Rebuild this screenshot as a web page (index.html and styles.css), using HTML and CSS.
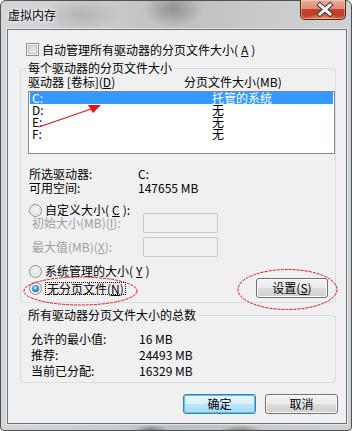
FILE: index.html
```html
<!DOCTYPE html>
<html lang="zh-CN">

<head>
    <meta charset="UTF-8">
    <title>虚拟内存</title>
    <link rel="stylesheet" href="styles.css">
</head>

<body>
    <div class="window">
        <div class="titlebar">
            <span class="title">虚拟内存</span>
            <a class="close" href="#">
                <svg width="46" height="19" viewBox="0 0 46 19">
                    <path d="M19 5 L29 14 M29 5 L19 14" stroke="#3d3d3d" stroke-width="5" stroke-linecap="square" fill="none"/>
                    <path d="M19 5 L29 14 M29 5 L19 14" stroke="#fff" stroke-width="3" stroke-linecap="square" fill="none"/>
                </svg>
            </a>
        </div>

        <div class="client">
            <label class="check-row"><span class="checkbox"></span>自动管理所有驱动器的分页文件大小(<u>A</u>)</label>

            <fieldset class="group group-drives">
                <legend>每个驱动器的分页文件大小</legend>
                <div class="list-head">
                    <span class="head-drive">驱动器 [卷标](<u>D</u>)</span>
                    <span>分页文件大小(MB)</span>
                </div>
                <ul class="list">
                    <li class="selected"><span class="col-drive">C:</span><span>托管的系统</span></li>
                    <li><span class="col-drive">D:</span><span>无</span></li>
                    <li><span class="col-drive">E:</span><span>无</span></li>
                    <li><span class="col-drive">F:</span><span>无</span></li>
                </ul>

                <div class="info">
                    <span>所选驱动器:</span><span>C:</span>
                    <span>可用空间:</span><span>147655 MB</span>
                </div>

                <div class="radio-row custom"><span class="radio"></span>自定义大小(<u>C</u>):</div>
                <div class="size-rows">
                    <div class="size-row"><span class="disabled">初始大小(MB)(<u>I</u>):</span><span class="textbox"></span></div>
                    <div class="size-row"><span class="disabled">最大值(MB)(<u>X</u>):</span><span class="textbox"></span></div>
                </div>
                <div class="radio-row"><span class="radio"></span>系统管理的大小(<u>Y</u>)</div>
                <div class="radio-row none-row">
                    <span class="radio on"></span><span class="focus">无分页文件(<u>N</u>)</span>
                    <a class="btn btn-set" href="#">设置(<u>S</u>)</a>
                </div>
            </fieldset>

            <fieldset class="group group-total">
                <legend>所有驱动器分页文件大小的总数</legend>
                <div class="totals">
                    <span>允许的最小值:</span><span>16 MB</span>
                    <span>推荐:</span><span>24493 MB</span>
                    <span>当前已分配:</span><span>16329 MB</span>
                </div>
            </fieldset>

            <div class="actions">
                <a class="btn btn-default" href="#">确定</a>
                <a class="btn" href="#">取消</a>
            </div>
        </div>

        <!-- 红色标注 -->
        <svg class="marks" width="352" height="431" viewBox="0 0 352 431">
            <line x1="39" y1="127" x2="91" y2="109" stroke="#e41414" stroke-width="1.2"/>
            <polygon points="88,105 101,105 93,113" fill="#e41414"/>
            <ellipse cx="80.5" cy="291" rx="56.5" ry="14" fill="none" stroke="#e41414" stroke-width="1" stroke-dasharray="3 1"/>
            <ellipse cx="287.5" cy="289.5" rx="49.5" ry="20" fill="none" stroke="#e41414" stroke-width="1" stroke-dasharray="3 1"/>
        </svg>
    </div>
</body>

</html>
```

FILE: styles.css
```css
* {
    margin: 0;
    padding: 0;
    box-sizing: border-box;
    list-style: none;
}

body {
    width: 352px;
    height: 431px;
    overflow: hidden;
    font: 12px/12px "Noto Sans CJK SC", "Noto Sans", sans-serif;
    color: #000;
}

a {
    color: #000;
    text-decoration: none;
}

u {
    text-underline-offset: 1px;
}

.window {
    position: relative;
    width: 352px;
    height: 431px;
    display: flex;
    flex-direction: column;
    border: 1px solid #4d5257;
    border-radius: 6px 6px 4px 4px;
    background:
        radial-gradient(ellipse 30px 18px at 172px 8px, rgba(90, 90, 90, .45), rgba(90, 90, 90, 0)),
        radial-gradient(ellipse 40px 16px at 80px 14px, rgba(120, 120, 120, .3), rgba(120, 120, 120, 0)),
        radial-gradient(ellipse 18px 6px at 150px 430px, rgba(60, 60, 60, .6), rgba(60, 60, 60, 0)),
        radial-gradient(ellipse 22px 6px at 240px 430px, rgba(60, 60, 60, .5), rgba(60, 60, 60, 0)),
        linear-gradient(90deg, #d3d5d7, #c9cbcd 30%, #bdbfc1 50%, #c8cacc 75%, #cfd1d3);
}

/* 标题栏 */
.titlebar {
    height: 28px;
    display: flex;
    justify-content: space-between;
    align-items: flex-start;
    padding-left: 7px;
}

.title {
    margin-top: 8px;
    font-size: 12px;
    text-shadow: 0 0 6px #fff, 0 0 3px #fff;
}

.close {
    width: 46px;
    height: 20px;
    margin-top: -1px;
    margin-right: 5px;
    border: 1px solid #5e2216;
    border-top: none;
    border-radius: 0 0 5px 5px;
    background:
        radial-gradient(ellipse 16px 6px at 50% 100%, rgba(255, 170, 110, .8), rgba(255, 170, 110, 0)),
        linear-gradient(#e7ab9e, #dc8d7b 45%, #c5412a 50%, #c0402a 80%, #cf6448);
    box-shadow: inset 0 0 0 1px rgba(255, 220, 210, .45);
}

.close svg {
    display: block;
}

/* 客户区 */
.client {
    margin: 0 4px 6px 6px;
    padding: 0 10px 9px 12px;
    border: 1px solid #6f7276;
    box-shadow: 0 0 0 1px rgba(255, 255, 255, .5);
    background: #f0f0f0;
}

.check-row {
    display: flex;
    align-items: center;
    gap: 3px;
    height: 13px;
    margin: 13px 0 0 6px;
}

.checkbox {
    width: 13px;
    height: 13px;
    border: 1px solid #8e8f8f;
    background: linear-gradient(135deg, #c9cdd2, #f4f5f6);
    box-shadow: inset 0 0 0 1px #f6f6f6, inset 0 0 0 2px #bfc3c8;
}

.group {
    border: 1px solid #d5dfe5;
    border-radius: 3px;
    padding: 2px 7px 4px 7px;
    min-inline-size: auto;
}

.group legend {
    padding: 0 2px;
    margin-left: -2px;
    line-height: 12px;
}

.group-drives {
    margin-top: 6px;
}

.list-head {
    display: flex;
    height: 12px;
}

.head-drive {
    width: 156px;
}

.list {
    height: 63px;
    margin: 3px -7px 0 0;
    border: 1px solid #828790;
    background: #fff;
}

.list li {
    display: flex;
    height: 12px;
    margin: 0 1px;
    padding-left: 2px;
}

.list li.selected {
    background: #3399ff;
    color: #fff;
}

.col-drive {
    width: 180px;
}

.info {
    display: grid;
    grid-template-columns: 109px auto;
    grid-auto-rows: 14px;
    align-items: center;
    margin-top: 13px;
    padding-left: 1px;
}

.radio-row {
    display: flex;
    align-items: center;
    gap: 3px;
    height: 14px;
    padding-left: 1px;
}

.custom {
    margin-top: 8px;
}

.radio {
    position: relative;
    flex: none;
    width: 13px;
    height: 13px;
    border: 1px solid #8e8f8f;
    border-radius: 50%;
    background: radial-gradient(circle at 50% 45%, #f6f6f6 0, #e2e2e2 55%, #c9c9c9 100%);
    box-shadow: inset 0 0 0 1px #f4f4f4;
}

.radio.on::after {
    content: "";
    position: absolute;
    left: 2px;
    top: 2px;
    width: 7px;
    height: 7px;
    border-radius: 50%;
    background: radial-gradient(circle at 45% 40%, #c4ecff 0, #4aa8e4 40%, #175fa3 75%, #0f3f73 100%);
}

.size-rows {
    display: flex;
    flex-direction: column;
    gap: 4px;
    margin-top: -4px;
}

.size-row {
    display: grid;
    grid-template-columns: 111px 75px;
    align-items: center;
    height: 20px;
    padding-left: 4px;
}

.disabled {
    color: #a0a0a0;
}

.textbox {
    height: 20px;
    border: 1px solid #c5c9cc;
    border-radius: 2px;
    background: #f0f0f0;
}

.size-rows + .radio-row {
    margin-top: 7px;
}

.none-row {
    height: 20px;
}

.focus {
    padding: 0 1px;
    border: 1px dotted #000;
    line-height: 11px;
}

.btn {
    display: flex;
    justify-content: center;
    align-items: center;
    width: 73px;
    height: 20px;
    border: 1px solid #707070;
    border-radius: 3px;
    background: linear-gradient(#f2f2f2, #ebebeb 50%, #dddddd 50%, #cfcfcf);
    box-shadow: inset 0 0 0 1px #fbfbfb;
}

.btn-set {
    width: 72px;
    margin-left: auto;
}

.btn-default {
    border-color: #3c7fb1;
    background: linear-gradient(#eaf6fd, #d9f0fc 50%, #bee6fd 50%, #a7d9f5);
    box-shadow: inset 0 0 0 1px #48c9f8;
}

.group-total {
    margin-top: 6px;
    padding: 10px 7px 3px 7px;
}

.totals {
    display: grid;
    grid-template-columns: 108px auto;
    grid-auto-rows: 16px;
    align-items: center;
    padding-left: 3px;
}

.actions {
    display: flex;
    justify-content: flex-end;
    gap: 9px;
    margin: 11px -2px 0 0;
}

/* 标注层 */
.marks {
    position: absolute;
    left: -1px;
    top: -1px;
    pointer-events: none;
}
```
